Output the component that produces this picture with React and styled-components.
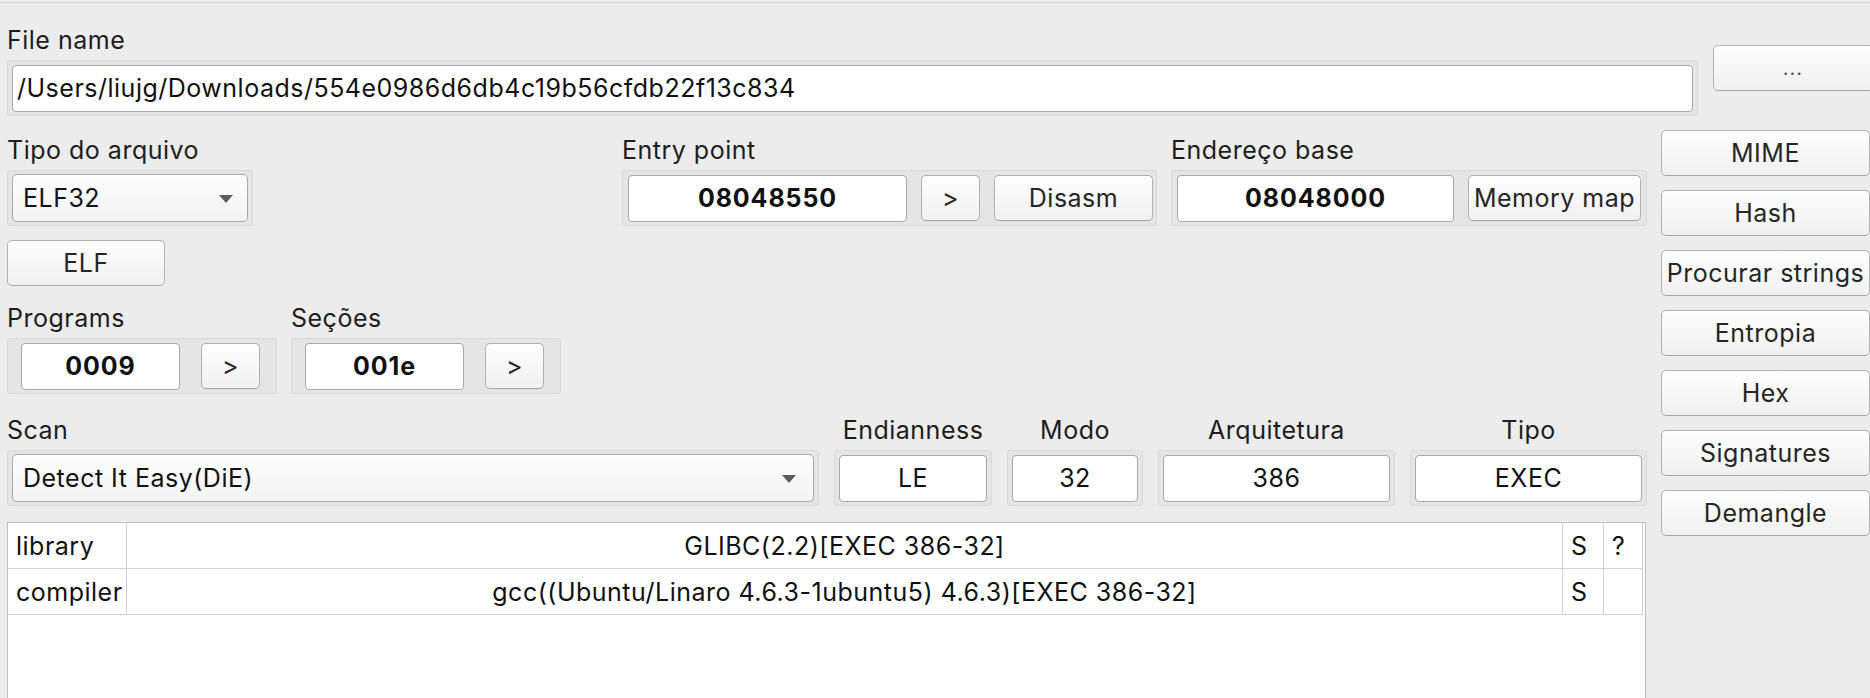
import React from "react";
import styled, { createGlobalStyle } from "styled-components";

const GlobalStyle = createGlobalStyle`
  html, body {
    margin: 0;
    padding: 0;
    background: #ececec;
  }
  body {
    font-family: Inter, "Liberation Sans", sans-serif;
    font-size: 25px;
    letter-spacing: 0.5px;
    color: #1d1d1d;
  }
`;

// [Window]
const Window = styled.div`
  width: 1870px;
  height: 696px;
  margin-top: 2px;
  box-sizing: border-box;
  border-top: 1px solid #d3d3d3;
  padding: 20px 0 0 7px;
  overflow: hidden;
`;

// [Labels / group frames]
const Group = styled.div`
  display: flex;
  flex-direction: column;
  gap: 7px;
  width: ${(p) => (p.$w ? `${p.$w}px` : "auto")};
  flex: ${(p) => (p.$grow ? 1 : "none")};
`;
const Label = styled.div`
  height: 30px;
  line-height: 34px;
  white-space: nowrap;
  text-align: ${(p) => p.$align || "left"};
`;
const Frame = styled.div`
  display: flex;
  align-items: center;
  gap: ${(p) => p.$gap || 14}px;
  box-sizing: border-box;
  height: 56px;
  padding: 0 ${(p) => p.$pr ?? p.$pl ?? 4}px 0 ${(p) => p.$pl ?? 4}px;
  border: 1px solid #d9d9d9;
  border-radius: 3px;
  background: #e5e5e5;
`;
const Field = styled.div`
  display: flex;
  align-items: center;
  justify-content: ${(p) => p.$align || "center"};
  box-sizing: border-box;
  height: 47px;
  width: ${(p) => (p.$w ? `${p.$w}px` : "auto")};
  flex: ${(p) => (p.$w ? "none" : 1)};
  padding: 0 4px;
  border: 1px solid #a9a9a9;
  border-radius: 4px;
  background: #ffffff;
  color: #111;
  font-weight: ${(p) => (p.$bold ? 700 : 400)};
  letter-spacing: ${(p) => (p.$bold ? "0.9px" : "0.5px")};
  white-space: nowrap;
  overflow: hidden;
`;
const Combo = styled.div`
  position: relative;
  display: flex;
  align-items: center;
  box-sizing: border-box;
  height: 48px;
  flex: 1;
  padding: 0 0 0 10px;
  border: 1px solid #aaaaaa;
  border-radius: 5px;
  background: linear-gradient(#fdfdfd, #f3f3f3);
  color: #111;
`;
const Arrow = styled.span`
  position: absolute;
  right: ${(p) => p.$right}px;
  top: 50%;
  margin-top: -3px;
  width: 0;
  height: 0;
  border-left: 7px solid transparent;
  border-right: 7px solid transparent;
  border-top: 8px solid #5c5c5c;
`;
const Button = styled.button`
  box-sizing: border-box;
  height: 46px;
  width: ${(p) => (p.$w ? `${p.$w}px` : "auto")};
  flex: none;
  margin: 0;
  padding: 0;
  border: 1px solid #b2b2b2;
  border-bottom-color: #a4a4a4;
  border-radius: 5px;
  background: linear-gradient(#fefefe, #f0f0f0);
  font-family: inherit;
  font-size: 25px;
  letter-spacing: 0.5px;
  color: #262626;
  white-space: nowrap;
`;

// [Top row]
const TopRow = styled.div`
  display: flex;
  align-items: flex-start;
  gap: 15px;
`;
const BrowseButton = styled(Button)`
  margin-top: 22px;
  width: 160px;
  color: #555;
  font-size: 20px;
  letter-spacing: 1px;
`;

// [Main]
const Main = styled.div`
  display: flex;
  gap: 14px;
  margin-top: 14px;
`;
const Left = styled.div`
  display: flex;
  flex-direction: column;
  width: 1640px;
  padding-top: 3px;
`;
const HeaderGrid = styled.div`
  display: grid;
  grid-template-columns: 246px 1fr 535px 476px;
  column-gap: 14px;
`;
const ElfButton = styled(Button)`
  margin-top: 14px;
  width: 158px;
`;
const CountRow = styled.div`
  display: flex;
  gap: 14px;
  margin-top: 15px;
`;
const ScanRow = styled.div`
  display: flex;
  gap: 15px;
  margin-top: 19px;
`;

// [Table]
const Table = styled.div`
  margin-top: 16px;
  width: 1639px;
  height: 200px;
  box-sizing: border-box;
  border: 1px solid #bfbfbf;
  background: #ffffff;
`;
const Row = styled.div`
  display: grid;
  grid-template-columns: 119px 1fr 41px 39px;
  margin-right: 2px;
  height: 46px;
  box-sizing: border-box;
  border-bottom: 1px solid #d2d2d2;
`;
const Cell = styled.div`
  display: flex;
  align-items: center;
  justify-content: ${(p) => (p.$center ? "center" : "flex-start")};
  padding: 0 ${(p) => (p.$center ? 0 : 8)}px;
  border-right: 1px solid #d2d2d2;
  color: #111;
  white-space: nowrap;
  overflow: hidden;
`;

// [Right buttons]
const SideColumn = styled.div`
  display: flex;
  flex-direction: column;
  gap: 14px;
  width: 210px;
`;

const sideButtons = [
  "MIME",
  "Hash",
  "Procurar strings",
  "Entropia",
  "Hex",
  "Signatures",
  "Demangle",
];

const results = [
  { type: "library", name: "GLIBC(2.2)[EXEC 386-32]", s: "S", q: "?" },
  {
    type: "compiler",
    name: "gcc((Ubuntu/Linaro 4.6.3-1ubuntu5) 4.6.3)[EXEC 386-32]",
    s: "S",
    q: "",
  },
];

function App() {
  return (
    <>
      <GlobalStyle />
      <Window>
        <TopRow>
          <Group $w={1691}>
            <Label>File name</Label>
            <Frame>
              <Field $align="flex-start">
                /Users/liujg/Downloads/554e0986d6db4c19b56cfdb22f13c834
              </Field>
            </Frame>
          </Group>
          <BrowseButton>...</BrowseButton>
        </TopRow>

        <Main>
          <Left>
            <HeaderGrid>
              <Group>
                <Label>Tipo do arquivo</Label>
                <Frame>
                  <Combo>
                    ELF32
                    <Arrow $right={14} />
                  </Combo>
                </Frame>
              </Group>
              <div />
              <Group>
                <Label>Entry point</Label>
                <Frame $pl={5}>
                  <Field $bold $w={279}>
                    08048550
                  </Field>
                  <Button $w={59}>&gt;</Button>
                  <Button $w={159}>Disasm</Button>
                </Frame>
              </Group>
              <Group>
                <Label>Endereço base</Label>
                <Frame $pl={5}>
                  <Field $bold>08048000</Field>
                  <Button $w={173}>Memory map</Button>
                </Frame>
              </Group>
            </HeaderGrid>

            <ElfButton>ELF</ElfButton>

            <CountRow>
              <Group $w={270}>
                <Label>Programs</Label>
                <Frame $pl={13} $gap={21}>
                  <Field $bold $w={159}>
                    0009
                  </Field>
                  <Button $w={59}>&gt;</Button>
                </Frame>
              </Group>
              <Group $w={270}>
                <Label>Seções</Label>
                <Frame $pl={13} $gap={21}>
                  <Field $bold $w={159}>
                    001e
                  </Field>
                  <Button $w={59}>&gt;</Button>
                </Frame>
              </Group>
            </CountRow>

            <ScanRow>
              <Group $w={812}>
                <Label>Scan</Label>
                <Frame>
                  <Combo>
                    Detect It Easy(DiE)
                    <Arrow $right={17} />
                  </Combo>
                </Frame>
              </Group>
              <Group $w={158}>
                <Label $align="center">Endianness</Label>
                <Frame>
                  <Field>LE</Field>
                </Frame>
              </Group>
              <Group $w={136}>
                <Label $align="center">Modo</Label>
                <Frame>
                  <Field>32</Field>
                </Frame>
              </Group>
              <Group $w={237}>
                <Label $align="center">Arquitetura</Label>
                <Frame>
                  <Field>386</Field>
                </Frame>
              </Group>
              <Group $w={237}>
                <Label $align="center">Tipo</Label>
                <Frame>
                  <Field>EXEC</Field>
                </Frame>
              </Group>
            </ScanRow>

            <Table>
              {results.map((r) => (
                <Row key={r.type}>
                  <Cell>{r.type}</Cell>
                  <Cell $center>{r.name}</Cell>
                  <Cell>{r.s}</Cell>
                  <Cell>{r.q}</Cell>
                </Row>
              ))}
            </Table>
          </Left>

          <SideColumn>
            {sideButtons.map((b) => (
              <Button key={b}>{b}</Button>
            ))}
          </SideColumn>
        </Main>
      </Window>
    </>
  );
}

export default App;
